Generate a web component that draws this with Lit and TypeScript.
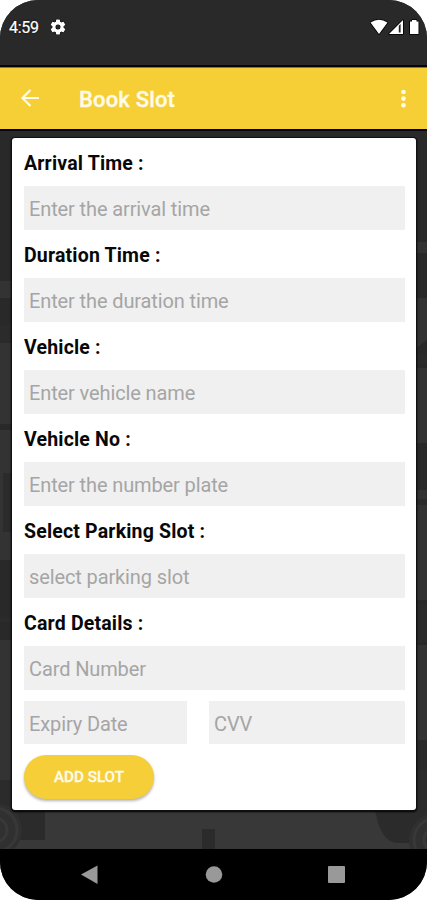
import { LitElement, html, css, svg } from "lit";
import { customElement, property } from "lit/decorators.js";

@customElement("form-field")
class FormField extends LitElement {
  @property() label = "";
  @property() hint = "";
  static styles = css`
    :host { display: block; height: 92px; }
    .label { height: 48px; line-height: 52px; font-size: 19.5px; letter-spacing: 0.18px; font-weight: 700; color: #080808; white-space: nowrap; }
    .input { box-sizing: border-box; display: block; width: 100%; height: 44px; border: 0; border-radius: 0; margin: 0; padding: 2px 5px 0; background: #f0f0f0; font: 20px Roboto, sans-serif; letter-spacing: -0.12px; outline: none; }
    .input::placeholder { color: #a5a5a5; opacity: 1; }
  `;
  render() {
    return html`<div class="label">${this.label}</div>
      <input class="input" placeholder=${this.hint} aria-label=${this.label} />`;
  }
}

const wheel = (x: number, y: number) => svg`
  <circle cx=${x} cy=${y} r="27" fill="#303030"/>
  <circle cx=${x} cy=${y} r="22" fill="none" stroke="#383838" stroke-width="3"/>
  <circle cx=${x} cy=${y} r="12" fill="none" stroke="#383838" stroke-width="3"/>`;

@customElement("app-root")
class AppRoot extends LitElement {
  static styles = css`
    :host { display: block; background: #fff; font-family: Roboto, sans-serif; }
    .phone { width: 427px; height: 900px; border-radius: 38px; overflow: hidden; background: #292929; display: flex; flex-direction: column; }
    .status { height: 67px; box-sizing: border-box; padding: 18px 7px 0 9px; display: flex; color: #fff; background: #292929; border-bottom: 2px solid #060410; }
    .time { font-size: 16px; line-height: 20px; width: 40px; letter-spacing: -0.3px; -webkit-text-stroke: 0.2px #fff; text-shadow: 0 0 2px #000; }
    .gear { margin: 0; }
    .signals { margin-left: auto; }
    .bar { height: 62px; box-sizing: border-box; background: #f6cf37; border-top: 1px solid #8b7527; display: flex; align-items: center; color: #fffbe8; }
    .back { margin-left: 20px; }
    .title { margin-left: 38px; font-size: 22px; font-weight: 500; line-height: 26px; padding-top: 3px; letter-spacing: 0.17px; -webkit-text-stroke: 0.35px #fffbe8; }
    .more { margin: 0 19px 0 auto; }
    .body { position: relative; height: 720px; box-sizing: border-box; padding: 7px 11px 0 12px; border-top: 2px solid #060412; background: #292929; }
    .scene { position: absolute; left: 0; top: 0; }
    .card { position: relative; box-sizing: border-box; height: 672px; padding: 0 11px 0 12px; background: #fff; border-radius: 3px; box-shadow: 0 0 0 1px #101010, 0 1px 2px 1px #000; }
    .row { display: grid; grid-template-columns: 163px 196px; gap: 22px; padding-top: 11px; }
    .input { box-sizing: border-box; width: 100%; height: 43px; border: 0; margin: 0; padding: 2px 5px 0; background: #f0f0f0; font: 20px Roboto, sans-serif; letter-spacing: -0.12px; outline: none; }
    .input::placeholder { color: #a5a5a5; opacity: 1; }
    .add { display: block; margin-top: 11px; width: 130px; height: 44px; border: 0; padding: 0; border-radius: 22px; background: #f5ce38; color: #fffbe8; font: 500 15.2px Roboto, sans-serif; -webkit-text-stroke: 0.3px #fffbe8; box-shadow: 0 2px 3px rgba(0,0,0,.3); }
    .nav { height: 51px; background: #000; }
  `;
  render() {
    return html`<div class="phone">
      <div class="status">
        <span class="time">4:59</span>
        <svg class="gear" width="18" height="18" viewBox="0.500 0.500 23 23" fill="#fff" stroke="#000" stroke-width="1.200" paint-order="stroke"><path fill-rule="evenodd" d="M19.1 12.9a7 7 0 0 0 0-1.8l2-1.6a.5.5 0 0 0 .1-.6l-1.9-3.3a.5.5 0 0 0-.6-.2l-2.4.9a7 7 0 0 0-1.6-.9l-.3-2.5a.5.5 0 0 0-.5-.5h-3.8a.5.5 0 0 0-.5.5l-.3 2.5a7 7 0 0 0-1.6.9l-2.4-.9a.5.5 0 0 0-.6.2L2.800 8.900a.5.5 0 0 0 .1.6l2 1.600a7 7 0 0 0 0 1.800l-2 1.600a.5.5 0 0 0-.1.600l1.900 3.300c.1.200.400.300.600.200l2.400-.900a7 7 0 0 0 1.600.900l.300 2.500c0 .300.200.500.500.500h3.800a.5.5 0 0 0 .5-.5l.3-2.500a7 7 0 0 0 1.600-.9l2.400.900c.200.100.500 0 .600-.200l1.900-3.300a.5.5 0 0 0-.1-.6zM12 15.200a3.200 3.200 0 1 1 0-6.400 3.200 3.200 0 0 1 0 6.400z"/></svg>
        <svg class="signals" width="50" height="20" viewBox="0 0 50 20">
          <g fill="#fff" stroke="#000" stroke-width="1.600" paint-order="stroke" stroke-linejoin="round">
            <path d="M.5 4.500Q9 -1 17.500 4.500L9 16Z"/>
            <path d="M19 16L33 2V16Z"/>
            <path d="M40 3.500H42V2H46.500V3.500H48.500V16H40Z"/>
          </g>
          <path d="M28.800 7.800L30.600 6V14.500H28.800Z" fill="#222"/>
        </svg>
      </div>
      <div class="bar">
        <svg class="back" width="21" height="20" viewBox="0 0 21 20" fill="none" stroke="#fffbe8" stroke-width="2.200"><path d="M19 9H3M10.500 1L2.500 9L10.500 17"/></svg>
        <span class="title">Book Slot</span>
        <svg class="more" width="9" height="20" viewBox="0 0 9 20" fill="#fffbe8"><circle cx="4.500" cy="3" r="2.300"/><circle cx="4.500" cy="9.600" r="2.300"/><circle cx="4.500" cy="16.200" r="2.300"/></svg>
      </div>
      <div class="body">
        <svg class="scene" width="427" height="718" viewBox="0 131 427 718">
          <rect x="0" y="790" width="427" height="59" fill="#383838"/>
          <path fill="#333" d="M0 281H14V298H0ZM0 343H14V424H0ZM0 430H14V560H0ZM0 640H14V780H0ZM414 242H427V253H414ZM414 298H427V340L414 350ZM414 368H427V443H414ZM414 490H427V600H414ZM414 645H427V740H414Z"/>
          <path fill="#2b2b2b" d="M0 325H14V341H0ZM3 473H14V532H3ZM0 617H14V622H0ZM414 354H427V364H414ZM414 499H427V505H414ZM414 604H427V642H414ZM0 780H45V840H0ZM202 829H215V849H202ZM374 805Q380 844 399 843H427V770H414V805Z"/>
          ${wheel(-5, 830)}${wheel(436, 840)}
        </svg>
        <div class="card">
          <form-field label="Arrival Time :" hint="Enter the arrival time"></form-field>
          <form-field label="Duration Time :" hint="Enter the duration time"></form-field>
          <form-field label="Vehicle :" hint="Enter vehicle name"></form-field>
          <form-field label="Vehicle No :" hint="Enter the number plate"></form-field>
          <form-field label="Select Parking Slot :" hint="select parking slot"></form-field>
          <form-field label="Card Details :" hint="Card Number"></form-field>
          <div class="row">
            <input class="input" placeholder="Expiry Date" /><input class="input" placeholder="CVV" />
          </div>
          <button class="add">ADD SLOT</button>
        </div>
      </div>
      <svg class="nav" width="427" height="51" viewBox="0 0 427 51" fill="#999"><path d="M81 25.500L97.500 16.500V35Z"/><circle cx="214" cy="25.500" r="8.300"/><rect x="328" y="17" width="17" height="17" rx="1"/></svg>
    </div>`;
  }
}
